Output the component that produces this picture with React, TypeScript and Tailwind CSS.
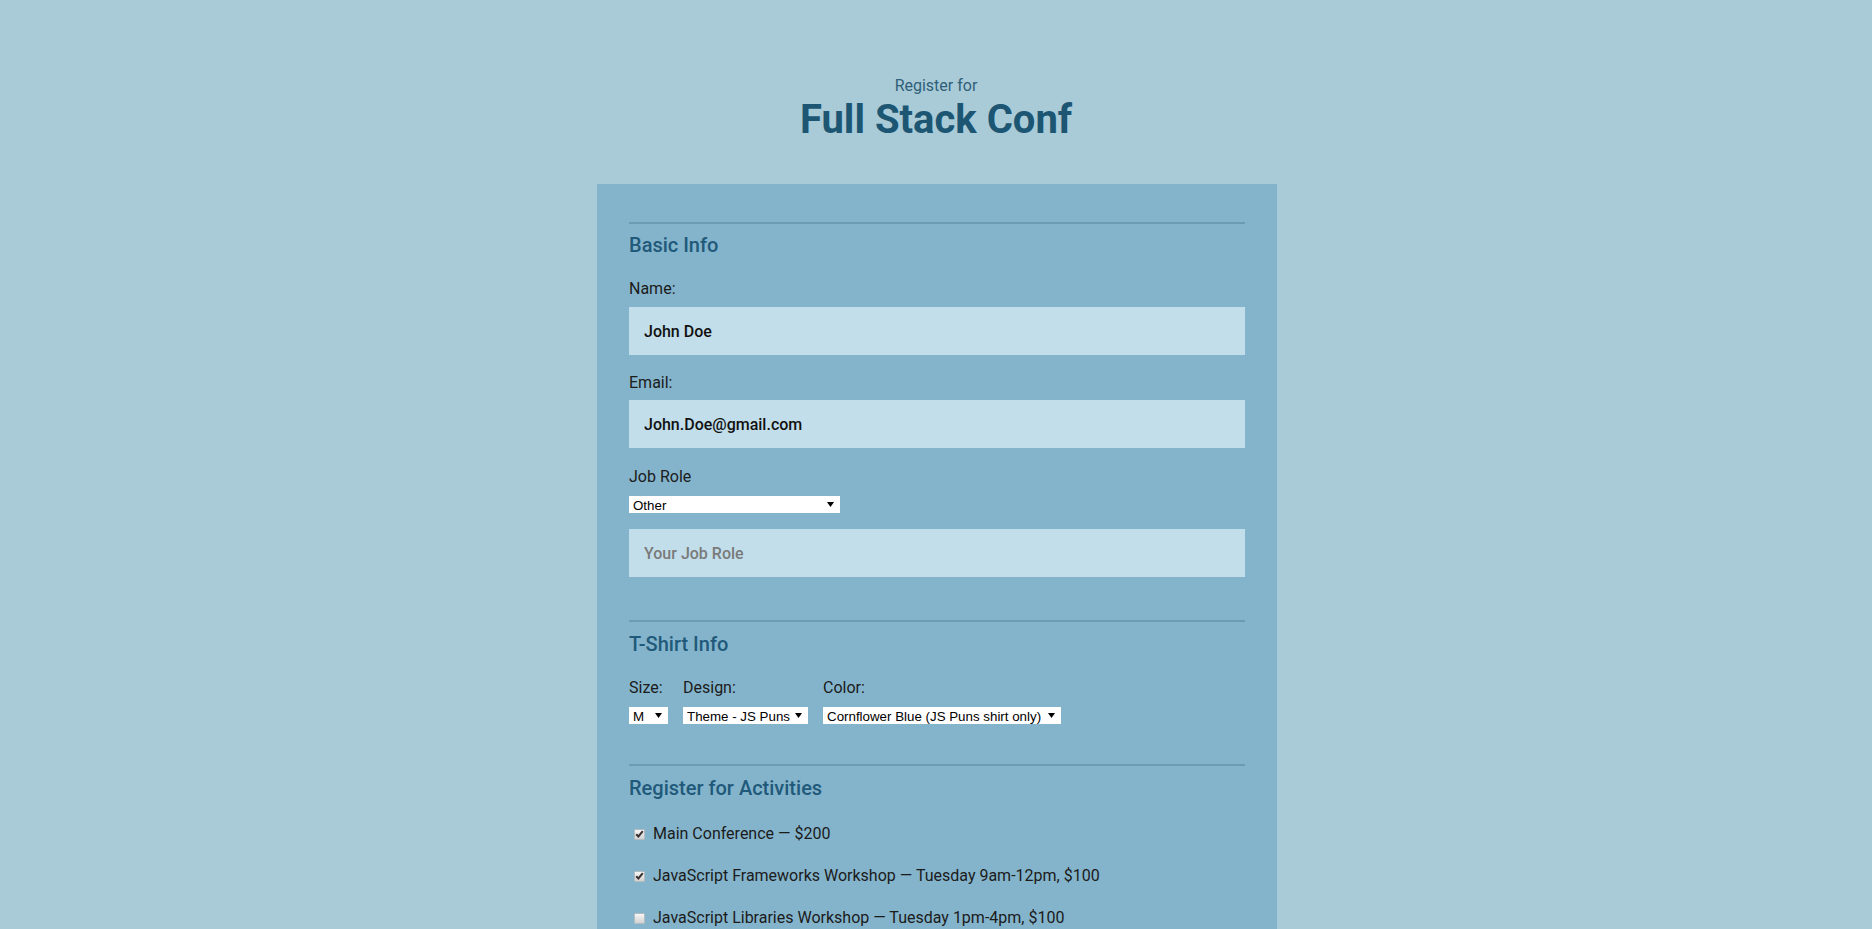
import React from 'react';

// Activities list for the registration form
const ACTIVITIES = [
  { label: 'Main Conference — $200', checked: true },
  { label: 'JavaScript Frameworks Workshop — Tuesday 9am-12pm, $100', checked: true },
  { label: 'JavaScript Libraries Workshop — Tuesday 1pm-4pm, $100', checked: false },
  { label: 'Express Workshop — Tuesday 9am-12pm, $100', checked: false },
  { label: 'Node.js Workshop — Tuesday 1pm-4pm, $100', checked: false },
];

const Arrow = () => (
  <svg width="7" height="5" viewBox="0 0 7 5" className="pointer-events-none absolute right-[6px] top-[6px]">
    <polygon points="0,0 7,0 3.5,5" fill="#000" />
  </svg>
);

const FakeSelect: React.FC<{ value: string; width: string }> = ({ value, width }) => (
  <div className={`relative h-[17px] overflow-hidden bg-white ${width}`}>
    <select
      defaultValue={value}
      className="block h-[17px] w-full appearance-none border-0 bg-white py-0 pl-[4px] pr-4 text-[13.33px] text-black outline-none font-['Liberation_Sans',Arial,sans-serif]"
    >
      <option>{value}</option>
    </select>
    <Arrow />
  </div>
);

const Heading: React.FC<{ children: React.ReactNode; mt: string }> = ({ children, mt }) => (
  <h2 className={`${mt} text-[20px] leading-[24px] font-medium text-[#21597a]`}>{children}</h2>
);

const Field: React.FC<{ value?: string; placeholder?: string }> = ({ value, placeholder }) => (
  <input
    type="text"
    defaultValue={value}
    placeholder={placeholder}
    className="block h-12 w-full bg-[#c1deea] px-[15px] text-[16px] font-medium text-[#111] outline-none placeholder:text-[#7a7a7a]"
  />
);

const CheckBox: React.FC<{ checked: boolean }> = ({ checked }) => (
  <span className="flex h-[11px] w-[11px] items-center justify-center rounded-[1px] border border-[#b3bcc1] bg-gradient-to-b from-[#f6f6f6] to-[#d2d2d2]">
    {checked && (
      <svg width="9" height="8" viewBox="0 0 9 8">
        <path d="M1.2 4.2 L3.4 6.4 L7.8 1.2" stroke="#3a3030" strokeWidth="2" fill="none" />
      </svg>
    )}
  </span>
);

export default function App() {
  return (
    <div className="min-h-screen bg-[#a9cbd8] font-['Roboto',sans-serif] text-[#1b1b1b]">
      <header className="pt-[76px] text-center">
        <p className="text-[16px] leading-5 text-[#2f6078]">Register for</p>
        <h1 className="text-[40px] leading-[48px] font-bold text-[#1d5673]">Full Stack Conf</h1>
      </header>

      <form className="mx-auto mt-[40px] w-[680px] translate-x-[1px] bg-[#84b4cb] px-8 pt-[38px] pb-10">
        {/* Basic info */}
        <fieldset className="border-t-2 border-[#6b9cb4]">
          <Heading mt="mt-[9px]">Basic Info</Heading>
          <label className="mt-[22px] block text-[16px] leading-5">Name:</label>
          <div className="mt-[8px]">
            <Field value="John Doe" />
          </div>
          <label className="mt-[18px] block text-[16px] leading-5">Email:</label>
          <div className="mt-[7px]">
            <Field value="John.Doe@gmail.com" />
          </div>
          <label className="mt-[19px] block text-[16px] leading-5">Job Role</label>
          <div className="mt-[9px]">
            <FakeSelect value="Other" width="w-[211px]" />
          </div>
          <div className="mt-[16px]">
            <Field placeholder="Your Job Role" />
          </div>
        </fieldset>

        {/* T-shirt */}
        <fieldset className="mt-[43px] border-t-2 border-[#6b9cb4]">
          <Heading mt="mt-[10px]">T-Shirt Info</Heading>
          <div className="mt-[22px] flex gap-[15px]">
            <div className="flex flex-col gap-[9px]">
              <label className="text-[16px] leading-5">Size:</label>
              <FakeSelect value="M" width="w-[39px]" />
            </div>
            <div className="flex flex-col gap-[9px]">
              <label className="text-[16px] leading-5">Design:</label>
              <FakeSelect value="Theme - JS Puns" width="w-[125px]" />
            </div>
            <div className="flex flex-col gap-[9px]">
              <label className="text-[16px] leading-5">Color:</label>
              <FakeSelect value="Cornflower Blue (JS Puns shirt only)" width="w-[238px]" />
            </div>
          </div>
        </fieldset>

        {/* Activities */}
        <fieldset className="mt-[40px] border-t-2 border-[#6b9cb4]">
          <Heading mt="mt-[10px]">Register for Activities</Heading>
          <div className="mt-[24px] flex flex-col gap-[22px]">
            {ACTIVITIES.map((a, i) => (
              <label key={i} className="flex h-5 items-center gap-[8px] pl-[5px] text-[16px] leading-5">
                <CheckBox checked={a.checked} />
                <span>{a.label}</span>
              </label>
            ))}
          </div>
        </fieldset>
      </form>
    </div>
  );
}
